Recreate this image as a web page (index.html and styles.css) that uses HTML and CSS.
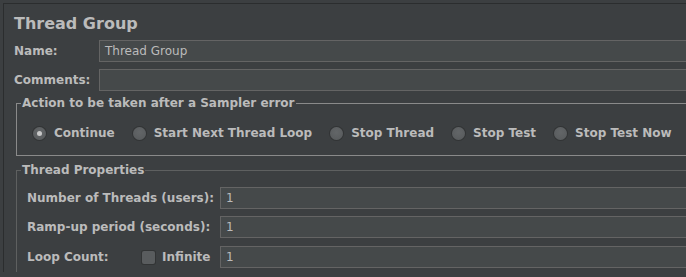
FILE: index.html
```html
<!DOCTYPE html>
<html>
<head>
<meta charset="utf-8">
<link rel="stylesheet" href="styles.css">
</head>
<body>
<div class="panel">
  <h1 class="title">Thread Group</h1>
  <div class="form">
    <label class="lbl">Name:</label>
    <div class="field">Thread Group</div>
    <label class="lbl">Comments:</label>
    <div class="field"></div>
  </div>
  <fieldset class="group action">
    <legend>Action to be taken after a Sampler error</legend>
    <div class="radios">
      <span class="radio"><span class="dot on"></span>Continue</span>
      <span class="radio"><span class="dot"></span>Start Next Thread Loop</span>
      <span class="radio"><span class="dot"></span>Stop Thread</span>
      <span class="radio"><span class="dot"></span>Stop Test</span>
      <span class="radio"><span class="dot"></span>Stop Test Now</span>
    </div>
  </fieldset>
  <fieldset class="group props">
    <legend>Thread Properties</legend>
    <div class="rows">
      <div class="row"><span class="lbl">Number of Threads (users):</span><div class="field">1</div></div>
      <div class="row"><span class="lbl">Ramp-up period (seconds):</span><div class="field">1</div></div>
      <div class="row loop">
        <span class="lbl loop-lbl">Loop Count:</span>
        <span class="check"><span class="box"></span>Infinite</span>
        <div class="field">1</div>
      </div>
    </div>
  </fieldset>
</div>
</body>
</html>
```
FILE: styles.css
```css
html, body {
  margin: 0;
  padding: 0;
  background: #3c3f41;
  overflow: hidden;
  width: 686px;
  height: 277px;
}
body {
  font-family: "DejaVu Sans", sans-serif;
  font-size: 12px;
  color: #bbbbbb;
}
.panel {
  margin: 3px 0 0 3px;
  width: 683px;
  border-top: 1px solid #2b2d2e;
  border-left: 1px solid #2b2d2e;
  padding-left: 10px;
  box-sizing: border-box;
}
.title {
  margin: 10px 0 0 0;
  font-size: 16px;
  line-height: 19px;
  font-weight: bold;
  color: #bbbbbb;
}
.form {
  margin-top: 7px;
  display: grid;
  grid-template-columns: 85px 1fr;
  row-gap: 7px;
  align-items: center;
}
.lbl {
  font-weight: bold;
  white-space: nowrap;
}
.field {
  height: 22px;
  box-sizing: border-box;
  background: #45494a;
  border: 1px solid #646464;
  border-right: none;
  padding-left: 5px;
  line-height: 20px;
  font-weight: normal;
  color: #bbbbbb;
}
.group {
  margin: 0 0 0 2px;
  padding: 0;
  border: 1px solid #8a8a8a;
  border-right: none;
  min-width: 0;
}
.group legend {
  margin-left: 4px;
  padding: 0 1px;
  font-weight: bold;
  line-height: 14px;
}
.action {
  margin-top: 5px;
}
.radios {
  display: flex;
  align-items: center;
  height: 22px;
  padding: 12px 0 11px 16px;
}
.radio {
  display: flex;
  align-items: center;
  gap: 8px;
  font-weight: bold;
  margin-right: 18px;
  white-space: nowrap;
}
.dot {
  width: 13px;
  height: 13px;
  border-radius: 50%;
  box-sizing: border-box;
  background: radial-gradient(circle at 50% 40%, #636668 0%, #56595b 100%);
  box-shadow: 0 0 0 1px #323435;
  position: relative;
}
.dot.on::after {
  content: "";
  position: absolute;
  left: 4px;
  top: 4px;
  width: 5px;
  height: 5px;
  border-radius: 50%;
  background: #c8c8c8;
}
.props {
  margin-top: 7px;
  border-color: #5e6060;
  border-bottom: none;
}
.rows {
  padding: 10px 0 4px 10px;
  display: flex;
  flex-direction: column;
  gap: 7px;
}
.row {
  display: flex;
  align-items: center;
}
.row.loop {
  margin-top: 1px;
}
.row .lbl {
  width: 193px;
}
.row .field {
  flex: 1;
}
.row .loop-lbl {
  width: 115px;
}
.check {
  display: flex;
  align-items: center;
  gap: 7px;
  width: 78px;
  font-weight: bold;
}
.box {
  width: 13px;
  height: 13px;
  box-sizing: border-box;
  border-radius: 2px;
  background: #595c5e;
  box-shadow: 0 0 0 1px #323435;
}
```
